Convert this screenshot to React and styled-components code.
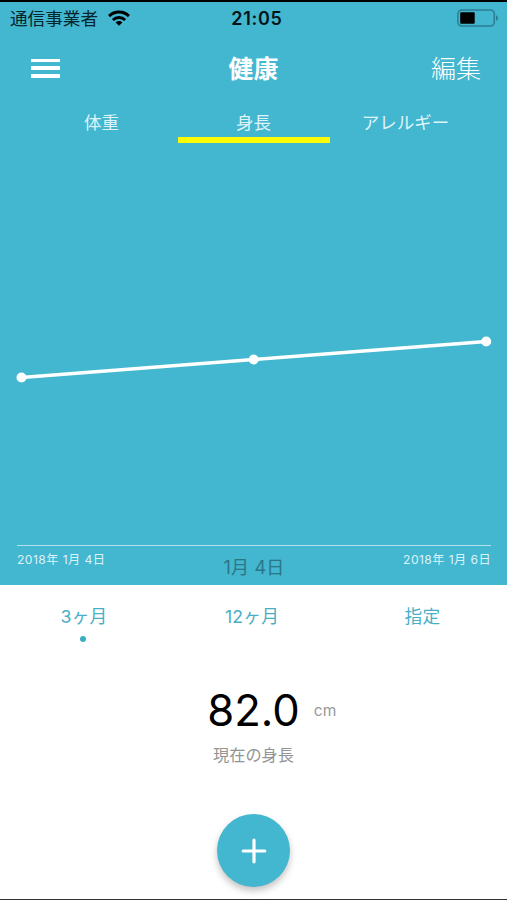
import React, { useState } from 'react';
import styled, { createGlobalStyle } from 'styled-components';

const GlobalStyle = createGlobalStyle`
  * {
    box-sizing: border-box;
  }

  body {
    margin: 0;
    font-family: Inter, "Noto Sans CJK JP", sans-serif;
    background-color: #fff;
  }

  button {
    padding: 0;
    border: none;
    background: none;
    font-family: inherit;
    cursor: pointer;
  }
`;

const Screen = styled.div`
  width: 507px;
  height: 900px;
  display: flex;
  flex-direction: column;
  border-top: 2px solid #000;
  border-bottom: 1px solid #333;
  overflow: hidden;
`;

const TopPanel = styled.div`
  height: 583px;
  flex-shrink: 0;
  display: flex;
  flex-direction: column;
  background-color: #43b6d0;
`;

const StatusBar = styled.div`
  height: 32px;
  display: grid;
  grid-template-columns: 1fr auto 1fr;
  align-items: center;
  padding: 0 8px 0 10px;
  color: #06252c;
`;

const Carrier = styled.div`
  display: flex;
  align-items: center;
  gap: 10px;
  padding-top: 1px;
  font-size: 17.6px;
  line-height: 32px;
  white-space: nowrap;

  svg {
    margin-bottom: 2px;
  }
`;

const Clock = styled.div`
  padding-left: 5px;
  font-size: 18px;
  font-weight: 600;
  letter-spacing: 0.7px;
  color: #04151a;
`;

const BatteryIcon = styled.svg`
  justify-self: end;
  margin-bottom: 1px;
`;

const NavBar = styled.header`
  height: 68px;
  display: grid;
  grid-template-columns: 1fr auto 1fr;
  align-items: center;
  padding: 0 26px 0 31px;
  color: #fff;
`;

const MenuButton = styled.button`
  width: 29px;
  height: 19px;
  display: flex;
  flex-direction: column;
  justify-content: space-between;
`;

const MenuLine = styled.span`
  width: 29px;
  height: 3.6px;
  background-color: #fff;
`;

const Title = styled.h1`
  margin: 1px 5px 0 0;
  font-size: 25px;
  line-height: 36px;
  font-weight: 700;
`;

const EditButton = styled.button`
  justify-self: end;
  padding-top: 2px;
  font-size: 25px;
  line-height: 36px;
  font-weight: 300;
  color: #fff;
`;

const Tabs = styled.nav`
  height: 41px;
  display: grid;
  grid-template-columns: repeat(3, 152px);
  justify-content: center;
`;

const Tab = styled.button`
  padding-top: 6px;
  border-bottom: 6px solid ${({ $active }) => ($active ? '#fdfb06' : 'transparent')};
  font-size: 17.5px;
  line-height: 28px;
  color: #def4f9;
`;

const Chart = styled.svg`
  display: block;
  flex: 1;
`;

const Axis = styled.div`
  height: 40px;
  margin: 0 16px 0 17px;
  display: grid;
  grid-template-columns: 1fr auto 1fr;
  border-top: 1.5px solid #b4e1ec;
`;

const AxisDate = styled.span`
  padding-top: 5px;
  text-align: ${({ $end }) => ($end ? 'right' : 'left')};
  font-size: 12.2px;
  line-height: 18px;
  letter-spacing: 0.4px;
  color: #dcf3f8;
`;

const SelectedDate = styled.span`
  padding-top: 8px;
  font-size: 18px;
  line-height: 27px;
  letter-spacing: 0.2px;
  color: #2c7587;
`;

const Periods = styled.div`
  height: 75px;
  display: grid;
  grid-template-columns: 168px 168px 173px;
  padding-top: 18px;
`;

const Period = styled.button`
  display: flex;
  flex-direction: column;
  align-items: center;
  font-size: 17.7px;
  line-height: 28px;
  letter-spacing: 0.2px;
  color: #48afc5;
`;

const ActiveDot = styled.span`
  width: 6px;
  height: 6px;
  margin: 5px 3px 0 0;
  border-radius: 50%;
  background-color: #3aaec5;
`;

const Reading = styled.div`
  height: 134px;
  display: grid;
  grid-template-columns: 1fr auto 1fr;
  grid-template-rows: 52px 36px;
  align-content: start;
  align-items: center;
  padding-top: 24px;
`;

const Value = styled.span`
  grid-column: 2;
  padding-top: 2px;
  font-size: 43.6px;
  line-height: 52px;
  color: #000;
`;

const Unit = styled.span`
  padding-left: 14px;
  font-size: 15.6px;
  color: #999;
`;

const Caption = styled.span`
  grid-column: 1 / -1;
  padding-top: 1px;
  text-align: center;
  font-size: 16.2px;
  line-height: 24px;
  color: #949494;
`;

const AddButton = styled.button`
  width: 73px;
  height: 73px;
  margin: 20px auto 0;
  display: flex;
  align-items: center;
  justify-content: center;
  border-radius: 50%;
  background-color: #43b6d0;
  box-shadow: 0 4px 7px rgba(0, 0, 0, 0.24);
`;

const tabs = ['体重', '身長', 'アレルギー'];
const periods = ['3ヶ月', '12ヶ月', '指定'];
const points = [
  { x: 21.5, y: 234.5 },
  { x: 253.7, y: 216.5 },
  { x: 486.2, y: 198.5 },
];

const WifiIcon = () => (
  <svg width="22" height="16" viewBox="0 0 22 16" fill="none" stroke="#000" strokeWidth="3">
    <path d="M1.1 6.1a14.2 14.2 0 0 1 19.8 0" />
    <path d="M4.9 10a8.8 8.8 0 0 1 12.2 0" />
    <path d="M11 15.8 7.6 12.4a4.9 4.9 0 0 1 6.8 0z" fill="#000" stroke="none" />
  </svg>
);

const App = () => {
  const [tab, setTab] = useState(1);
  const [period, setPeriod] = useState(0);

  return (
    <>
      <GlobalStyle />
      <Screen>
        <TopPanel>
          <StatusBar>
            <Carrier>
              通信事業者
              <WifiIcon />
            </Carrier>
            <Clock>21:05</Clock>
            <BatteryIcon width="42" height="18" viewBox="0 0 42 18">
              <rect x="0.9" y="0.9" width="36.4" height="16.2" rx="4" fill="none" stroke="#2c7c90" strokeWidth="1.5" />
              <rect x="3.2" y="3.2" width="14.5" height="11.6" rx="1" fill="#000" />
              <path d="M39 6.2c2.6 1 2.6 4.6 0 5.6z" fill="#2c7c90" />
            </BatteryIcon>
          </StatusBar>

          <NavBar>
            <MenuButton aria-label="メニュー">
              <MenuLine />
              <MenuLine />
              <MenuLine />
            </MenuButton>
            <Title>健康</Title>
            <EditButton>編集</EditButton>
          </NavBar>

          <Tabs>
            {tabs.map((label, i) => (
              <Tab key={label} $active={i === tab} onClick={() => setTab(i)}>
                {label}
              </Tab>
            ))}
          </Tabs>

          <Chart width="507" height="402" viewBox="0 0 507 402">
            <polyline
              points={points.map((p) => `${p.x},${p.y}`).join(' ')}
              fill="none"
              stroke="#fff"
              strokeWidth="3.4"
            />
            {points.map((p) => (
              <circle key={p.x} cx={p.x} cy={p.y} r="5" fill="#fff" />
            ))}
          </Chart>

          <Axis>
            <AxisDate>2018年 1月 4日</AxisDate>
            <SelectedDate>1月 4日</SelectedDate>
            <AxisDate $end>2018年 1月 6日</AxisDate>
          </Axis>
        </TopPanel>

        <Periods>
          {periods.map((label, i) => (
            <Period key={label} onClick={() => setPeriod(i)}>
              {label}
              {i === period && <ActiveDot />}
            </Period>
          ))}
        </Periods>

        <Reading>
          <Value>82.0</Value>
          <Unit>cm</Unit>
          <Caption>現在の身長</Caption>
        </Reading>

        <AddButton aria-label="追加">
          <svg width="26" height="26" viewBox="0 0 26 26" stroke="#fff" strokeWidth="3.2" strokeLinecap="round">
            <path d="M13 2.2v21.6M2.2 13h21.6" />
          </svg>
        </AddButton>
      </Screen>
    </>
  );
};

export default App;
